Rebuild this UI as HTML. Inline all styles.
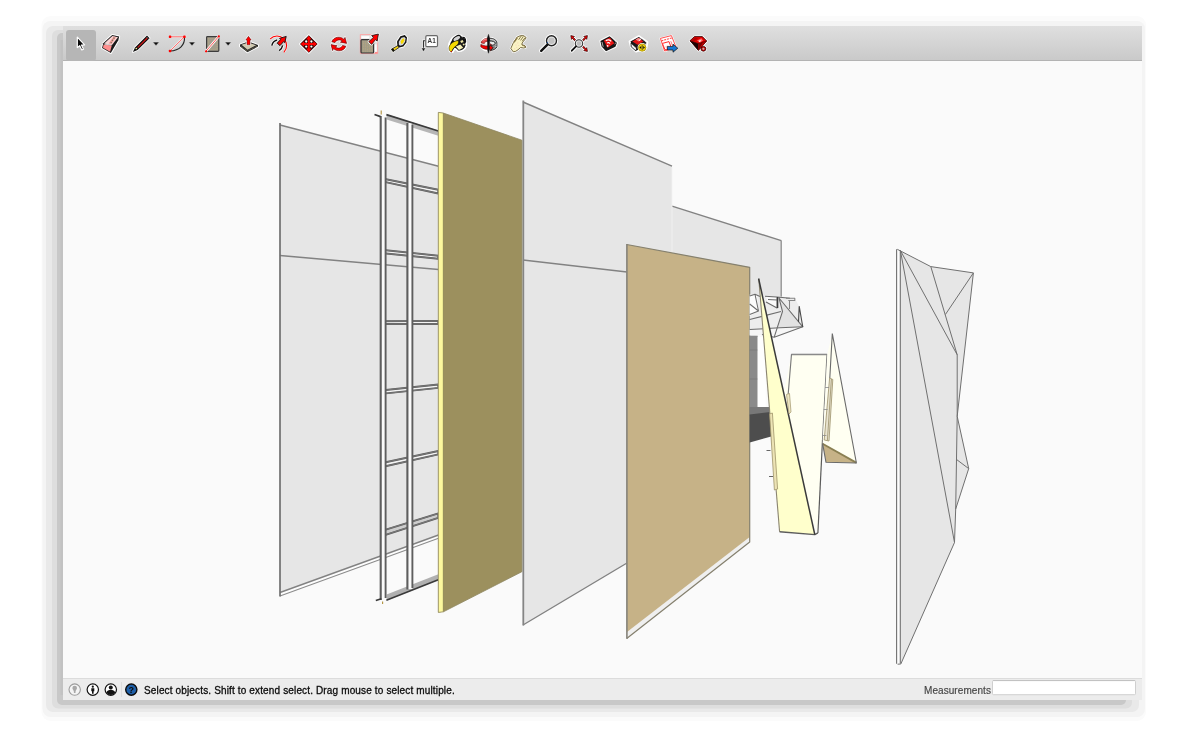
<!DOCTYPE html>
<html lang="en">
<head>
<meta charset="utf-8">
<title>SketchUp</title>
<style>
html,body{margin:0;padding:0;background:#fff;}
body{width:1200px;height:740px;overflow:hidden;position:relative;font-family:"Liberation Sans",sans-serif;}
#scene{position:absolute;left:0;top:0;width:1200px;height:740px;display:block;will-change:transform;}
.status{position:absolute;top:678.6px;height:22px;line-height:23px;font-size:10px;white-space:nowrap;will-change:transform;}
#hint{left:144px;color:#0c0c0c;letter-spacing:0.145px;-webkit-text-stroke:0.3px #0c0c0c;}
#meas{left:923.6px;color:#444;letter-spacing:0.07px;-webkit-text-stroke:0.15px #444;}
</style>
</head>
<body>
<svg id="scene" width="1200" height="740" viewBox="0 0 1200 740">
<defs>
<linearGradient id="tb" x1="0" y1="0" x2="0" y2="1">
<stop offset="0" stop-color="#dfdfdf"/><stop offset="1" stop-color="#c9c9c9"/>
</linearGradient>
</defs>
<!-- SHADOW -->
<g id="shadow">
<rect x="41.5" y="16" width="1104.5" height="705" rx="9" fill="#fbfbfb"/>
<rect x="42.5" y="21" width="1102.500" height="696" rx="8" fill="#f4f4f4"/>
<rect x="46" y="26" width="1093" height="686" rx="7" fill="#e9e9e9"/>
<rect x="52" y="30" width="1080" height="678.500" rx="6" fill="#dedede"/>
<rect x="57" y="33" width="1069" height="672" rx="5" fill="#c8c8c8"/>
<rect x="60.500" y="40" width="3" height="655" fill="#c2c2c2"/>
</g>
<!-- WINDOW -->
<rect x="63" y="26" width="1079" height="674" fill="#fafafa"/>
<rect x="63" y="26" width="1079" height="35" fill="url(#tb)"/>
<rect x="63" y="60" width="1079" height="1" fill="#b3b3b3"/>
<rect x="63" y="678" width="1079" height="22" fill="#ececec"/>
<rect x="63" y="678" width="1079" height="1" fill="#dcdcdc"/>
<!-- SCENE -->
<g id="model" stroke-linejoin="round">
<!--P1-->
<g id="p1">
<polygon points="280,125 438.5,166.2 438.5,535 280,592.5" fill="#e6e6e6"/>
<polygon points="280,592.5 438.5,535 438.5,538 280,596" fill="#fdfdfd"/>
<path d="M280,125 L438.5,166.2 M280,255.5 L438.5,269.5 M280,592.5 L438.5,535" fill="none" stroke="#828282" stroke-width="1.4"/><path d="M280,596 L438.5,538.3" fill="none" stroke="#8c8c8c" stroke-width="1.1"/>
<path d="M280,123 V596.5" fill="none" stroke="#707070" stroke-width="1.7"/>
</g>
<!--P4-->
<g id="p4">
<polygon points="672,206.2 781.3,240.6 781.3,300 672,300" fill="#e6e6e6"/>
<path d="M672,206.2 L781.3,240.6" fill="none" stroke="#828282" stroke-width="1.4"/><path d="M781.2,240.6 V297" fill="none" stroke="#949494" stroke-width="1.4"/>
<polygon points="523,102 672,166.2 672,536 523,625" fill="#e6e6e6"/>
<path d="M672,167 V253" fill="none" stroke="#f2f2f2" stroke-width="0.8"/>
<path d="M523,102 L672,166.2 M523,260 L627,272 M523,625 L627,563" fill="none" stroke="#828282" stroke-width="1.4"/>
<path d="M523.3,100.5 V625.5" fill="none" stroke="#858585" stroke-width="1.8"/>
</g>
<!--FRAME-->
<g id="frame" fill="none" stroke="#5e5e5e" stroke-width="1.9">
<polygon points="381,178.2 438.3,189.8 438.3,193.5 381,181.1" fill="#f4f4f4"/>
<polygon points="381,249.7 438.3,255.7 438.3,258.7 381,253.0" fill="#f4f4f4"/>
<polygon points="381,321.3 438.3,320.9 438.3,324.0 381,324.0" fill="#f4f4f4"/>
<polygon points="381,390.5 438.3,384.5 438.3,387.9 381,393.9" fill="#f4f4f4"/>
<polygon points="381,463.2 438.3,451.0 438.3,454.4 381,467.3" fill="#f4f4f4"/>
<polygon points="381,531.1 438.3,513.4 438.3,517.8 381,536.3" fill="#cdcdcd"/>
<path d="M381,178.2 L438.3,189.8 M381,181.1 L438.3,193.5 M381,249.7 L438.3,255.7 M381,253.0 L438.3,258.7 M381,321.3 L438.3,320.9 M381,324.0 L438.3,324.0 M381,390.5 L438.3,384.5 M381,393.9 L438.3,387.9 M381,463.2 L438.3,451.0 M381,467.3 L438.3,454.4 M381,531.1 L438.3,513.4 M381,536.3 L438.3,517.8 " stroke="#787878" stroke-width="1.05"/>
<polygon points="386.6,114.3 438.3,130.6 438.3,135.7 386.6,119.6" fill="#b6b6b6" stroke="none"/>
<polygon points="386.6,594.5 438.3,574.2 438.3,580 386.6,600.4" fill="#b0b0b0" stroke="none"/>
<rect x="380.7" y="116" width="5" height="483" fill="#fafafa" stroke="none"/>
<rect x="407.4" y="123" width="5" height="466" fill="#fafafa" stroke="none"/>
<path d="M380.7,116 V600 M407.4,123 V589.5" stroke-width="2.1"/>
<path d="M385.6,117.5 V598 M412.4,124.5 V588"/>
<path d="M374.5,114.5 L380.5,116.6 M386.4,114.6 L438.3,131" stroke="#3a3a3a" stroke-width="1.7"/>
<path d="M381.2,110.5 V114.5" stroke="#b0903a" stroke-width="1.1"/>
<path d="M375.8,600.6 L381.4,598.8 M386.4,600.2 L438.3,579.8" stroke="#3a3a3a" stroke-width="1.6"/>
<path d="M382.6,601.5 V604" stroke="#b0903a" stroke-width="1.1"/>
</g>
<!--OLIVE-->
<g id="olive">
<polygon points="438.3,112.4 443.2,113 521.9,140.2 521.9,571.7 443.4,611.8 438.3,612.4" fill="#9c905e"/>
<polygon points="438.3,112.4 443.2,113 443.2,611.9 438.3,612.4" fill="#fdf89e"/>
<path d="M443.3,113 V611.8" fill="none" stroke="#8a7f52" stroke-width="0.7"/>
<path d="M438.3,112.4 L443.2,113 L521.9,140.2 V571.7 L443.4,611.8 L438.3,612.4 Z" fill="none" stroke="#8e8660" stroke-width="0.8"/>
</g>
<!--TAN-->
<g id="tan">
<polygon points="626.7,632 749.7,537 749.7,542 626.7,638.5" fill="#efefef"/>
<polygon points="626.7,244.5 749.7,267.3 749.7,537 626.7,632.2" fill="#c6b287"/>
<path d="M626.7,638.5 L749.7,542 V267.3 L626.7,244.5" fill="none" stroke="#85806e" stroke-width="1.2"/>
<path d="M626.9,244 V638.8" fill="none" stroke="#86837a" stroke-width="1.6"/>
</g>
<!--RIGHT-->
<g id="right">
<!-- shelf mesh -->
<polygon points="749.7,294.5 781,296.5 795,298.5 799.2,306.5 802.8,327 774.2,337.2 762,334.5 749.7,335.5" fill="#ededed"/>
<polygon points="779.5,298.5 802.6,326.8 776.5,329.5 782.5,311.5" fill="#e2e2e2"/>
<polygon points="749.7,296 757,294.5 758.5,311 749.7,316" fill="#fcfcfc"/>
<polygon points="766,297 778,298 778,308 768,303" fill="#fbfbfb"/>
<polygon points="749.7,329.5 780,327.8 802.8,327 774.2,337.2 762,334.5 749.7,335.5" fill="#f6f6f6"/>
<g fill="none" stroke="#6c6c6c" stroke-width="1.05">
<path d="M749.7,296 L755,294.3 L760,296.5 M755,294.3 L758.5,311 L749.7,304 M758.5,311 L749.7,314.5 M749.7,319.5 L781,311.5 M749.7,329.5 L780,327.8 L802.8,326.8"/>
<path d="M765,296.2 L777,297 L790,298.2 M768,299.5 L777,300 M777,297 V308 L766,302 M779,298 L802.8,326.8 L774.2,337.2 L782.5,311.5 L779,298 M774.2,337.2 L762,334.5"/>
<path d="M786,298.3 H794.8 V300.5 H788.3 M789.5,300.4 V309" stroke="#858585"/>
<path d="M799.2,306.2 L802.8,327 M799.2,306.2 L798.5,322" stroke="#4a4a4a" stroke-width="1.1"/>
<path d="M777.6,297 V308" stroke="#3c3c3c" stroke-width="1.4"/>
</g>
<!-- dark column -->
<rect x="749.7" y="335.7" width="8" height="72" fill="#8a8a8a"/>
<path d="M749.7,350 H757.7 M749.7,379 H757.7" stroke="#7a7a7a" stroke-width="0.8" fill="none"/>
<rect x="757.7" y="337" width="8" height="70" fill="#fefefe"/>
<polygon points="749.7,407 769.5,407 770.5,413 749.7,416" fill="#787878"/>
<polygon points="749.7,414.5 770.5,412 773,436 749.7,442.5" fill="#4d4d4d"/>
<!-- cream panel -->
<polygon points="791.5,354.3 827,354.3 818,533 812,520 784,392" fill="#fffff2"/>
<path d="M788.2,394 L791.5,354.3 H827 L822.5,440" fill="none" stroke="#7a7a7a" stroke-width="1.15"/><path d="M822.5,440 L817.9,533" fill="none" stroke="#5a5a5a" stroke-width="1.200"/>
<path d="M791.5,354.6 H827" fill="none" stroke="#8a8a8a" stroke-width="1.1"/>
<!-- triangle 2 -->
<polygon points="832.3,333.6 856.4,463 822.6,443.4 827.3,354" fill="#fffff2"/>
<polygon points="822.6,443.4 856.4,463 826,462.3" fill="#c6b287"/>
<path d="M822.6,443.8 L856.2,462.6" fill="none" stroke="#8a7f52" stroke-width="1.8"/>
<path d="M832.3,333.6 L856.4,463 L826,462.3 L822.6,443.4 M832.3,333.6 L829.8,378" fill="none" stroke="#6a6a6a" stroke-width="1.1"/>
<!-- handle right -->
<polygon points="829.6,378 832.8,379.5 829,441 824.2,440" fill="#e9e4d0"/>
<path d="M829.6,378 L832.8,379.5 L829,441 L824.2,440 Z M831.4,379 L827.4,440.5" fill="none" stroke="#9a8f68" stroke-width="0.8"/>
<path d="M825,387.5 H829 M823.6,409.5 H827.6 M822.4,435.5 H826.4" fill="none" stroke="#8a8a8a" stroke-width="0.8"/>
<!-- yellow triangle -->
<polygon points="758.8,279 814.8,534.6 779.600,531.800" fill="#ffffcc"/>
<path d="M758.8,279 L779.600,531.800" fill="none" stroke="#8a8470" stroke-width="1.100"/>
<path d="M779.600,531.800 L814.800,534.600 L817.900,532.800" fill="none" stroke="#5c5c5c" stroke-width="1.400"/>
<path d="M758.6,278.500 L814.800,534.600" fill="none" stroke="#3a3a3a" stroke-width="1.500"/>
<!-- handle left -->
<polygon points="769.6,414 772.4,413 777.6,489 774.4,490" fill="#ece3b4"/>
<path d="M769.6,414 L772.4,413 L777.6,489 L774.4,490 Z" fill="none" stroke="#a0946a" stroke-width="0.8"/>
<path d="M766.5,450.5 H770.5 M769,476.5 H773" fill="none" stroke="#555" stroke-width="0.9"/>
<polygon points="786.5,394.5 789.5,393.5 791,412 789,414" fill="#efe8c4" stroke="#a0946a" stroke-width="0.7"/>
</g>
<!--FAR-->
<g id="far">
<polygon points="897.3,249.3 930.8,266.6 973.4,272.9 957.2,416.3 968.7,468.6 955.7,509 954.5,542.5 900.8,664" fill="#e6e6e6"/>
<rect x="896.6" y="249.5" width="3.7" height="414.5" rx="1" fill="#fcfcfc"/>
<g fill="none" stroke="#707070" stroke-width="1">
<path d="M897.3,249.3 L930.8,266.6 L973.4,272.9 L957.2,416.3 L968.7,468.6 L955.7,509 L954.5,542.5 L900.8,664 L897.6,664.2"/>
<path d="M900.4,250.5 L957.2,354.8 M900.4,250.5 L954.5,542.5 M930.8,266.6 L957.2,354.8 M973.4,272.9 L945.4,314.5 M957.2,354.8 L957.2,416.3 L955.7,509 M956.3,459.3 L968.7,468.6"/>
<path d="M896.6,249.3 V663.8 M900.3,250.5 V663.5" stroke-width="1.1"/>
</g>
</g>
</g>
<!-- TOOLBAR -->
<g id="tools">
<rect x="66" y="30" width="30" height="31" rx="3" fill="#b6b6b6"/>
<!-- select -->
<path d="M77.3,37.1 L77.3,47.6 L79.7,45.7 L81.8,50 L83.5,49.2 L81.5,45.1 L84.6,44.9 Z" fill="#0a0a0a" stroke="#fff" stroke-width="1.2" stroke-linejoin="round"/>
<!-- eraser -->
<g stroke-linejoin="round">
<path d="M103.2,43.3 L112.2,35 L119.2,36.5 L118.3,40.2 L110.8,53 L102.1,48 Z" fill="#111" stroke="#fff" stroke-width="2"/>
<path d="M103.2,43.3 L112.2,35 L119.2,36.5 L118.3,40.2 L110.8,53 L102.1,48 Z" fill="#1a1a1a"/>
<path d="M104.2,43.6 L112.4,36 L118,37.2 L112,45 Z" fill="#f9d4d4"/>
<path d="M108.6,43.6 L113.6,36.6 L116,37.2 L111.4,44 Z" fill="#f59a9a"/>
<path d="M103.6,44.6 L111.8,45.6 L110.1,51.8 L103,47.8 Z" fill="#ff8e8e"/>
<path d="M110.6,42.4 l1.2,0.3 M111.8,40.2 l1.2,0.3 M113.4,38 l1.2,0.3" stroke="#7f7c5c" stroke-width="1.3" fill="none"/>
<path d="M104.6,44.2 L111.4,45" stroke="#fff" stroke-width="0.8" fill="none"/>
</g>
<!-- pencil -->
<g>
<path d="M132.9,51.9 L135,47.4 L147,35.6 L149.6,38.2 L137.6,50 Z" fill="#111" stroke="#fff" stroke-width="1.7" stroke-linejoin="round"/>
<path d="M132.9,51.9 L135,47.4 L147,35.6 L149.6,38.2 L137.6,50 Z" fill="#111"/>
<path d="M137.6,47.6 L147.2,38" stroke="#d01818" stroke-width="1.2" fill="none"/>
<circle cx="136.3" cy="48.5" r="0.8" fill="#f4e68a"/>
<path d="M147,37.4 l0.9,0.9" stroke="#ccc" stroke-width="0.8"/>
<path d="M152.7,42.1 H159.3 L156,45.7 Z" fill="#0c0c0c" stroke="#e2e2e2" stroke-width="0.6"/>
</g>
<!-- arc -->
<g fill="none">
<path d="M170,36.8 H184.4 L170,51" stroke="#fff" stroke-width="2" opacity="0.6"/>
<path d="M184.4,36.8 C185.2,45 179.5,50.6 170,51" stroke="#222" stroke-width="1.1"/>
<path d="M170,36.8 H184.4 L170,51" stroke="#ff6a6a" stroke-width="1"/>
<rect x="168.8" y="35.6" width="2.5" height="2.5" rx="0.8" fill="#f00"/><rect x="183.2" y="35.6" width="2.5" height="2.5" rx="0.8" fill="#f00"/><rect x="168.8" y="49.8" width="2.5" height="2.5" rx="0.8" fill="#f00"/>
<path d="M188.7,42.1 H195.3 L192,45.7 Z" fill="#0c0c0c" stroke="#e2e2e2" stroke-width="0.6"/>
</g>
<!-- rectangle -->
<g>
<rect x="206.6" y="36.7" width="12.2" height="14.6" rx="0.8" fill="#a39d8c" stroke="#3c3c3c" stroke-width="1.2"/>
<rect x="208.4" y="38.6" width="8.6" height="10.8" fill="none" stroke="#b8ab84" stroke-width="0.8" stroke-dasharray="1 1"/>
<path d="M205.8,51.5 L218.9,36.2" stroke="#fff" stroke-width="2.4" fill="none"/>
<path d="M205.8,51.5 L218.9,36.2" stroke="#ff5a5a" stroke-width="1" fill="none"/>
<circle cx="206.1" cy="51.3" r="1.1" fill="#f00"/><circle cx="218.8" cy="36.4" r="1.1" fill="#f00"/>
<path d="M224.8,42.1 H231.4 L228.1,45.7 Z" fill="#0c0c0c" stroke="#e2e2e2" stroke-width="0.6"/>
</g>
<!-- push/pull -->
<g stroke-linejoin="round">
<path d="M240,44.6 L248.4,41.4 L258,45 L258,46.6 L247.4,52.3 L240,46.4 Z" fill="#222" stroke="#fff" stroke-width="1.8"/>
<path d="M240,44.6 L248.4,41.4 L258,45 L258,46.6 L247.4,52.3 L240,46.4 Z" fill="#2a2a2a"/>
<path d="M241.6,44.8 L248.4,42.4 L256.2,45.2 L247.5,49.8 Z" fill="#cfc9b0"/>
<path d="M241,46.6 L247.4,51 L257.4,46.2" stroke="#a89c6c" stroke-width="0.6" stroke-dasharray="0.8 0.8" fill="none"/>
<path d="M248.5,36.3 L251.2,40 L250,40 L250,44.8 L247,44.8 L247,40 L245.8,40 Z" fill="#f00" stroke="#fff" stroke-width="1.6"/>
<path d="M248.5,36.3 L251.2,40 L250,40 L250,44.8 L247,44.8 L247,40 L245.8,40 Z" fill="#f00" stroke="#5a1010" stroke-width="0.5"/>
</g>
<!-- follow me -->
<g fill="none">
<path d="M270.2,38.8 A9,9 0 0 1 283.8,52.4" stroke="#fff" stroke-width="2" opacity="0.7"/>
<path d="M270.2,38.8 A9,9 0 0 1 283.8,52.4" stroke="#f00" stroke-width="1.1"/>
<path d="M271.8,45.6 C272.4,42.6 274.2,40.8 277,40" stroke="#fff" stroke-width="2.8"/>
<path d="M279.2,50.6 C281,49.6 282.2,47.8 282.6,45.4" stroke="#fff" stroke-width="2.8"/>
<path d="M271.8,45.6 C272.4,42.6 274.2,40.8 277,40" stroke="#111" stroke-width="1.4"/>
<path d="M279.2,50.6 C281,49.6 282.2,47.8 282.6,45.4" stroke="#111" stroke-width="1.4"/>
<path d="M286.2,36.4 L284.8,42.6 L283.6,41.6 L280,45.6 L277.2,43.2 L280.6,39.6 L279.6,38.4 Z" fill="#f00" stroke="#111" stroke-width="0.9" stroke-linejoin="round"/>
</g>
<!-- move -->
<g stroke-linejoin="round">
<path d="M308.8,35.2 L317.6,44 L308.8,52.8 L300,44 Z" fill="#1a1a1a" stroke="#fff" stroke-width="1.8"/>
<path d="M308.8,35.2 L317.6,44 L308.8,52.8 L300,44 Z" fill="#2a0a0a"/>
<path d="M308.8,35.8 L311.6,39.4 L309.8,39.4 L309.8,43 L313.4,43 L313.4,41.2 L317,44 L313.4,46.8 L313.4,45 L309.8,45 L309.8,48.600 L311.6,48.6 L308.8,52.2 L306,48.6 L307.8,48.6 L307.8,45 L304.2,45 L304.2,46.8 L300.6,44 L304.2,41.2 L304.2,43 L307.8,43 L307.8,39.4 L306,39.4 Z" fill="#f00"/>
<circle cx="306.2" cy="41.5" r="1.15" fill="#fff"/><circle cx="311.4" cy="41.5" r="1.15" fill="#fff"/><circle cx="306.2" cy="46.6" r="1.15" fill="#fff"/><circle cx="311.4" cy="46.6" r="1.15" fill="#fff"/>
</g>
<!-- rotate -->
<g fill="none" stroke-linejoin="round">
<path d="M331.8,41.8 C333.4,36.6 340.6,35.8 344,39.4 L345,37.4 L346.6,43.4 L340.4,42.2 L342.2,41 C340.2,39.2 336.4,39.6 335,42.600 Z" fill="#f00" stroke="#fff" stroke-width="2"/>
<path d="M345.800,46.200 C344.200,51.400 337.000,52.200 333.600,48.600 L332.600,50.600 L331.000,44.600 L337.200,45.800 L335.400,47.000 C337.400,48.800 341.200,48.400 342.600,45.400 Z" fill="#f00" stroke="#fff" stroke-width="2"/>
<path d="M331.8,41.8 C333.4,36.6 340.6,35.8 344,39.4 L345,37.4 L346.6,43.4 L340.4,42.2 L342.2,41 C340.2,39.2 336.4,39.6 335,42.600 Z" fill="#f00" stroke="#500" stroke-width="0.6"/>
<path d="M345.800,46.200 C344.200,51.400 337.000,52.200 333.600,48.600 L332.600,50.600 L331.000,44.600 L337.200,45.800 L335.400,47.000 C337.400,48.800 341.200,48.400 342.600,45.400 Z" fill="#f00" stroke="#500" stroke-width="0.6"/>
</g>
<!-- scale -->
<g stroke-linejoin="round">
<rect x="360.3" y="34.6" width="17.4" height="19" fill="#e2e2e2" stroke="#ffa0a0" stroke-width="0.9"/>
<rect x="361.4" y="36.2" width="8" height="2.2" fill="#fff"/>
<rect x="374.4" y="44.400" width="2.2" height="7.2" fill="#fff"/>
<rect x="375" y="52" width="2.6" height="1.6" fill="#ff8a8a"/>
<rect x="361" y="39.6" width="12.6" height="13.4" rx="0.9" fill="#a39c88" stroke="#333" stroke-width="1.2"/>
<path d="M363.4,41.4 V51.6 M365.4,41.4 V51.6 M367.4,42.6 V51.6 M369.4,44.6 V51.6 M371.4,46.6 V51.6" stroke="#b9ab80" stroke-width="0.8" fill="none" stroke-dasharray="1 0.6"/>
<path d="M378.4,34 L377.2,41.2 L375.6,39.6 L371.6,44.4 L368.8,41.600 L373.400,37.400 L371.600,35.600 Z" fill="#f00" stroke="#fff" stroke-width="2.2"/>
<path d="M378.4,34 L377.2,41.2 L375.6,39.6 L371.6,44.4 L368.8,41.600 L373.400,37.400 L371.600,35.600 Z" fill="#f00" stroke="#111" stroke-width="0.8"/>
</g>
<!-- tape -->
<g stroke-linejoin="round">
<path d="M391.4,49.2 L397.8,45.6 L399,47.600 L393,51.6 Z M397,41.4 L400.4,36.2 L404.8,35 L407,37.6 L406.4,42.4 L403.4,46.6 L399.4,47.600 L397.4,45.4 Z" fill="#111" stroke="#fff" stroke-width="1.8"/>
<path d="M391.4,49.2 L397.8,45.6 L399,47.600 L393,51.6 Z" fill="#f2d21a" stroke="#111" stroke-width="0.8"/>
<path d="M391.4,49.2 L393.2,48.2 L394.6,50.6 L393,51.6 Z" fill="#111"/>
<path d="M397,41.4 L400.4,36.2 L404.8,35 L407,37.6 L406.4,42.4 L403.4,46.6 L399.4,47.600 L397.4,45.4 Z" fill="#141414"/>
<path d="M398.8,41.8 L401.4,37.8 L404.4,37 L405.6,38.6 L405,42 L402.8,45 L400,45.800 L398.8,44.400 Z" fill="#d6d6d6"/>
<path d="M400.6,41.600 L402.400,38.800 L404,38.600 L404.400,40.200 L403,43.200 L401.200,44 Z" fill="#f6d800"/>
</g>
<!-- text -->
<g>
<path d="M425.6,40.8 H423.5 V48.6" fill="none" stroke="#fff" stroke-width="2.4" opacity="0.7"/>
<path d="M425.6,40.8 H423.5 V48.6" fill="none" stroke="#333" stroke-width="1.1"/>
<path d="M421.4,48 H425.6 L423.5,51.8 Z" fill="#111" stroke="#fff" stroke-width="0.5"/>
<rect x="425.8" y="35.7" width="11.7" height="10.9" rx="1.2" fill="#fff" stroke="#6a6a6a" stroke-width="1.2"/>
<text x="431.7" y="43.4" font-family="Liberation Sans, sans-serif" font-size="6.4" font-weight="bold" text-anchor="middle" fill="#3a3a3a">A1</text>
</g>
<!-- paint bucket -->
<g stroke-linejoin="round">
<path d="M448.6,47 C449,42 451.6,37.600 456.6,35.400 C459.600,34.600 461.800,35.600 463,37 C465.200,36.800 466.600,39.200 466,41.600 L466.200,46 C465.200,49.400 461.400,51.600 458,51 L455,48.600 L452.600,52.200 L449.800,51.400 Z" fill="#111" stroke="#fff" stroke-width="1.8"/>
<path d="M454.200,40.400 C454.200,37.600 459.200,34.800 462,36.800 L465.400,45.800 C464.400,49.200 460.600,51 458,50.400 Z" fill="#1c1c1c"/>
<ellipse cx="456.800" cy="38.600" rx="4.300" ry="2.300" transform="rotate(-32 456.800 38.600)" fill="#d4d4d4" stroke="#111" stroke-width="1.100"/>
<path d="M462.400,37.400 C465.600,36.800 466.600,41.400 464.600,43.400" fill="none" stroke="#111" stroke-width="1.100"/>
<path d="M455.800,46.600 L460.400,44.600 L463.200,47.800 L459,50 Z" fill="#f7f1b8"/>
<path d="M460.200,41 l2.400,-1 l1,2 l-2.400,1 Z M462.600,44 l1.600,-0.600 l0.600,1.600 l-1.600,0.600 Z" fill="#efe7a4"/>
<path d="M458.200,40.600 C453.600,41 449.800,43.800 449,47.400 C448.800,49.800 449.800,51.400 451.400,52 C452.400,50 453.200,48 455.200,46.600 C457.400,45 459.400,43.200 458.200,40.600 Z" fill="#f7da00" stroke="#111" stroke-width="0.500"/>
<circle cx="451.400" cy="51.600" r="0.700" fill="#c00"/>
</g>
<!-- orbit -->
<g fill="none" stroke-linejoin="round">
<path d="M481,43 C481,39.400 485,37.400 488.500,37.600 C492.600,37.400 497.200,39.400 497.200,43.200 L497.200,46 C497.200,49.200 493,50.800 488.500,50.800 C484.400,50.800 481,48.800 481,45.600 Z" fill="#e8e8e8" stroke="#fff" stroke-width="1.6"/>
<path d="M481.200,43 C481.400,40.200 484.600,38.200 488,38.200 L488,41.200 C486.200,41.200 484.800,42 484.400,43.400 Z" fill="#e64a4a" stroke="#600" stroke-width="0.600"/>
<path d="M482.600,40.600 C483.600,39.600 485.200,39 486.800,39" stroke="#ffb8b8" stroke-width="0.900"/>
<path d="M484.600,43.400 C485.400,42.400 486.600,42 488,42 L488,44 Z" fill="#fff"/>
<path d="M480.800,44.400 C483.800,46 487,46.200 490.400,45.800 L490.400,43.800 L494.600,47.400 L490.400,51 L490.400,49.200 C486.600,49.800 482.400,48.800 480.800,46.800 Z" fill="#f00000" stroke="#500" stroke-width="0.600"/>
<path d="M489.600,38.200 C493.800,38.200 497,40.200 497,43 L497,46.400 C496.600,48.800 493.600,50.200 490.600,50.400 L493.200,47.600 L490.400,45.400 C493.200,45.200 495.200,44.600 495.200,43.200 C495.200,41.800 492.600,41 489.600,41 Z" fill="#8e8e8e" stroke="#1a1a1a" stroke-width="0.800"/>
<path d="M490,39.400 C492.400,39.400 495,40.400 495.800,41.800" stroke="#dcdcdc" stroke-width="0.900"/>
<path d="M495.400,44.400 L496.800,44 M495,46.600 L496.800,46.200" stroke="#ddd" stroke-width="0.600"/>
<path d="M488.5,34.400 L489.600,38 L489.300,50.600 L488.5,53.200 L487.700,50.600 L487.400,38 Z" fill="#111" stroke="#111" stroke-width="0.500"/>
</g>
<!-- pan hand -->
<g stroke-linejoin="round">
<path d="M510.800,48.400 L513.400,42.600 L517.200,37 L520.600,35.600 L523.800,35.700 L526.200,37.600 L525.200,39.200 L522.800,42 L521.700,44.400 L525.200,45.900 L525.800,47.400 L523.800,48 L520.600,47.500 L518,49.800 L515.600,51.400 L513.200,51.800 Z" fill="#f7efb4" stroke="#fff" stroke-width="2.200"/>
<path d="M510.800,48.400 L513.400,42.600 L517.200,37 L520.600,35.600 L523.800,35.700 L526.200,37.600 L525.200,39.200 L522.800,42 L521.700,44.400 L525.200,45.900 L525.800,47.400 L523.800,48 L520.600,47.500 L518,49.800 L515.600,51.400 L513.200,51.800 Z" fill="#faf4c4" stroke="#6a5c34" stroke-width="0.900"/>
<path d="M518.600,39.800 L521.200,36 M520.600,40.400 L523.400,36.400 M522.200,41.200 L525.200,37.600" stroke="#6a5c34" stroke-width="0.800" fill="none"/>
<path d="M514,42.400 L517.400,37.600" stroke="#8a7a48" stroke-width="1.300" fill="none"/>
<path d="M522,45 L525.200,46.400" stroke="#8a7a48" stroke-width="1" fill="none"/>
<path d="M515.600,45 l0.800,0 M517.400,43 l0.800,0 M516.400,47.400 l0.800,0 M518.400,45.600 l0.800,0 M514.400,48.800 l0.800,0" stroke="#f0c0b0" stroke-width="0.800" fill="none"/>
</g>
<!-- zoom -->
<g fill="none">
<path d="M541.200,50.800 L547.200,44.800" stroke="#fff" stroke-width="4.4" stroke-linecap="round"/>
<circle cx="551.500" cy="40.700" r="5" fill="#fff" stroke="#fff" stroke-width="3.2"/>
<circle cx="551.500" cy="40.700" r="5" fill="#ececec" stroke="#222" stroke-width="1.400"/>
<circle cx="551.500" cy="40.700" r="3.200" fill="#c2c2c2"/>
<path d="M541.200,50.800 L547.200,44.800" stroke="#111" stroke-width="2.500" stroke-linecap="round"/>
<circle cx="547.400" cy="42.600" r="0.600" fill="#1a5fb4"/>
</g>
<!-- zoom extents -->
<g fill="none" stroke-linejoin="round">
<path d="M570.8,35.600 L574.4,36.400 L573.400,37.400 L576,40.200 L575,41.200 L572.400,38.400 L571.400,39.400 Z M587.400,35.600 L583.800,36.400 L584.800,37.400 L582.200,40.200 L583.200,41.200 L585.800,38.400 L586.800,39.400 Z M587.400,51.400 L583.800,50.600 L584.800,49.600 L582.200,46.800 L583.200,45.800 L585.800,48.600 L586.800,47.600 Z" fill="#f00" stroke="#fff" stroke-width="2.200"/>
<path d="M570.8,35.600 L574.4,36.400 L573.400,37.400 L576,40.200 L575,41.200 L572.400,38.400 L571.400,39.400 Z M587.400,35.600 L583.800,36.400 L584.800,37.400 L582.200,40.200 L583.200,41.200 L585.800,38.400 L586.800,39.400 Z M587.400,51.400 L583.800,50.600 L584.800,49.600 L582.200,46.800 L583.200,45.800 L585.800,48.600 L586.800,47.600 Z" fill="#f00" stroke="#2a0a0a" stroke-width="0.800"/>
<path d="M571.800,50.700 L576,46.400" stroke="#fff" stroke-width="3.800" stroke-linecap="round"/>
<circle cx="579" cy="43.500" r="3.700" fill="#fff" stroke="#fff" stroke-width="2.800"/>
<circle cx="579" cy="43.500" r="3.700" fill="#e4e4e4" stroke="#3a3a3a" stroke-width="1.100"/>
<circle cx="579" cy="43.500" r="2.200" fill="#bdbdbd"/>
<path d="M571.800,50.700 L576,46.400" stroke="#111" stroke-width="1.900" stroke-linecap="round"/>
</g>
<!-- 3d warehouse -->
<g stroke-linejoin="round">
<path d="M600.400,41 L609.600,36.200 L617,42.400 L615.400,46.800 L606,51.200 L601.600,46.400 Z" fill="#111" stroke="#fff" stroke-width="2"/>
<path d="M600.400,41 L609.600,36.200 L617,42.400 L615.400,46.800 L606,51.200 L601.600,46.400 Z" fill="#161616"/>
<path d="M603.800,40.400 L609.800,37.400 L614.400,43.200 L607.600,47.800 Z" fill="#e81414"/>
<path d="M605.800,40.800 C607.600,39.400 610,39.600 611.200,41.400" stroke="#fff" stroke-width="1.100" fill="none"/>
<path d="M607,43.200 C608.200,42.200 609.400,42.600 610,43.600" stroke="#fff" stroke-width="1.100" fill="none"/>
<circle cx="607.600" cy="45.800" r="0.900" fill="#fff"/>
<path d="M602,42 L603.200,46.800" stroke="#bbb" stroke-width="0.900" fill="none"/>
<path d="M613.400,38.600 L616.400,42.400 L614.600,44" stroke="#ddd" stroke-width="0.700" fill="none"/>
</g>
<!-- extension warehouse -->
<g stroke-linejoin="round">
<path d="M629.600,41.400 L638.800,36.200 L647.400,42 L646.400,48 L636,51.600 L631,47 Z" fill="#111" stroke="#fff" stroke-width="2"/>
<path d="M630.400,41.600 L638.800,37 L646.400,42.200 L637,47.400 Z" fill="#1a1a1a"/>
<path d="M632.400,41.400 L638.600,38 L643.600,41.400 L637.600,44.800 Z" fill="#e31616"/>
<path d="M635.600,39.400 L638.600,37.800 L641.600,39.800 L638.600,41.600 Z" fill="#f78a8a"/>
<path d="M631,43 L636.600,48 L636,51 L631.200,46.800 Z" fill="#eee" stroke="#111" stroke-width="0.800"/>
<path d="M643.200,39.600 L646.400,42.200 L646,44.800" stroke="#ddd" stroke-width="1" fill="none"/>
<path d="M639.400,40.800 l1.200,-2.200" stroke="#fff" stroke-width="1" fill="none"/>
<circle cx="642.200" cy="47.600" r="4.100" fill="#f3d40c" stroke="#fff" stroke-width="1.200"/>
<circle cx="642.200" cy="47.600" r="3.700" fill="#f5d60c" stroke="#8a7400" stroke-width="0.600"/>
<path d="M639.400,47.600 l1.800,-1.500 v3 Z M645,47.600 l-1.800,-1.500 v3 Z" fill="#111"/>
<path d="M642.200,45 V50.200" stroke="#111" stroke-width="0.700" fill="none"/>
</g>
<!-- layout -->
<g stroke-linejoin="round">
<path d="M660.400,38.400 L671.400,35.600 L676.200,47.600 L664.600,51 Z" fill="#fff" stroke="#fff" stroke-width="2"/>
<path d="M660.400,38.400 L671.400,35.600 L676.200,47.600 L664.600,51 Z" fill="#fff" stroke="#ff3a3a" stroke-width="0.900"/>
<path d="M661.400,40.800 L672.400,37.800" stroke="#ff4a4a" stroke-width="1.200" stroke-dasharray="2 0.900" fill="none"/>
<path d="M662.400,43.400 L669,41.600 L671.400,48 L665,49.800 Z" fill="#fff" stroke="#ff2a2a" stroke-width="1"/>
<path d="M665.200,46.200 l2.600,-0.800 l0.800,2 l-2.600,0.800 Z" fill="#ffd0d0"/>
<path d="M670.800,41.200 L672.800,46.400" stroke="#ff7a7a" stroke-width="1" fill="none"/>
<path d="M667.400,46.400 L673,46.400 L673,44.200 L677.800,48.200 L673,52.200 L673,50 L667.400,50 Z" fill="#1676d2" stroke="#111" stroke-width="0.700"/>
</g>
<!-- ruby -->
<g stroke-linejoin="round">
<path d="M690,40.700 L694.400,36.600 L702.400,36.600 L706.700,41 L698.400,50.400 Z" fill="#d40000" stroke="#fff" stroke-width="2.200"/>
<circle cx="703.400" cy="48.800" r="2.700" fill="#c00" stroke="#fff" stroke-width="1.400"/>
<path d="M690,40.700 L694.400,36.600 L702.400,36.600 L706.700,41 L698.400,50.400 Z" fill="#e00000" stroke="#2a0000" stroke-width="0.800"/>
<path d="M690,40.700 L698.400,50.400 L698.200,43.600 Z" fill="#1a0000"/>
<path d="M698.200,43.600 L703,42.600 L698.400,50.400 Z" fill="#7a0000"/>
<path d="M703,42.600 L706.700,41 L700.400,48 Z" fill="#b00000"/>
<path d="M691,40.400 L695,37.400 L698,38.200 L694,41.400 Z" fill="#b00000"/>
<path d="M690,40.700 L698.200,43.600 L706.700,41" fill="none" stroke="#4a0000" stroke-width="0.700"/>
<path d="M697,40.400 L701.400,38.200 L703,40.400 L700,42.400 Z" fill="#ff6a6a"/>
<path d="M698.600,41 l1.800,-1 l0.600,1 l-1.600,1 Z" fill="#fff"/>
<circle cx="703.400" cy="48.800" r="2.400" fill="#d00000" stroke="#2a0000" stroke-width="0.800"/>
<circle cx="703.400" cy="48.800" r="1.100" fill="#c9b0b0"/>
</g>
</g>
</g>
<!-- STATUS -->
<g id="statusicons" fill="none">
<circle cx="74.7" cy="689.6" r="5.7" fill="#f4f4f4" stroke="#9c9c9c" stroke-width="1.1"/>
<path d="M74.7,685.8 a2.3,2.3 0 0 1 2.3,2.3 c0,1.4 -1.4,2.2 -1.5,3.6 v1.4 h-1.6 v-1.4 c-0.1,-1.4 -1.5,-2.2 -1.5,-3.6 a2.3,2.3 0 0 1 2.3,-2.3 Z" fill="#a8a8a8"/>
<circle cx="92.8" cy="689.6" r="5.7" fill="#fff" stroke="#111" stroke-width="1.2"/>
<circle cx="92.8" cy="686.7" r="1.1" fill="#111"/>
<path d="M91.3,688.2 h3 v3 h-0.7 v2.6 h-1.6 v-2.6 h-0.7 Z" fill="#111"/>
<circle cx="110.8" cy="689.6" r="5.7" fill="#fff" stroke="#111" stroke-width="1.2"/>
<circle cx="110.8" cy="687.6" r="2" fill="#111"/>
<path d="M106.4,692.6 c0.6,-2 2.4,-2.8 4.4,-2.8 s3.8,0.8 4.4,2.8 c-1,1.6 -2.6,2.4 -4.4,2.4 s-3.400,-0.800 -4.400,-2.400 Z" fill="#111"/>
<path d="M121.5,682 V697" stroke="#dcdcdc" stroke-width="1"/>
<circle cx="131.3" cy="689.6" r="5.6" fill="#1e5fa8" stroke="#0b0b0b" stroke-width="1.4"/>
<text x="131.3" y="693" font-family="Liberation Sans, sans-serif" font-size="9" font-weight="bold" text-anchor="middle" fill="#0a0a0a" stroke="none">?</text>
</g>
<rect x="992.5" y="680.5" width="143" height="14.200" rx="1" fill="#fff" stroke="#cfcfcf" stroke-width="1"/><path d="M993,680.600 H1135" stroke="#bdbdbd" stroke-width="0.800" fill="none"/>
</svg>
<div class="status" id="hint">Select objects. Shift to extend select. Drag mouse to select multiple.</div>
<div class="status" id="meas">Measurements</div>
</body>
</html>
